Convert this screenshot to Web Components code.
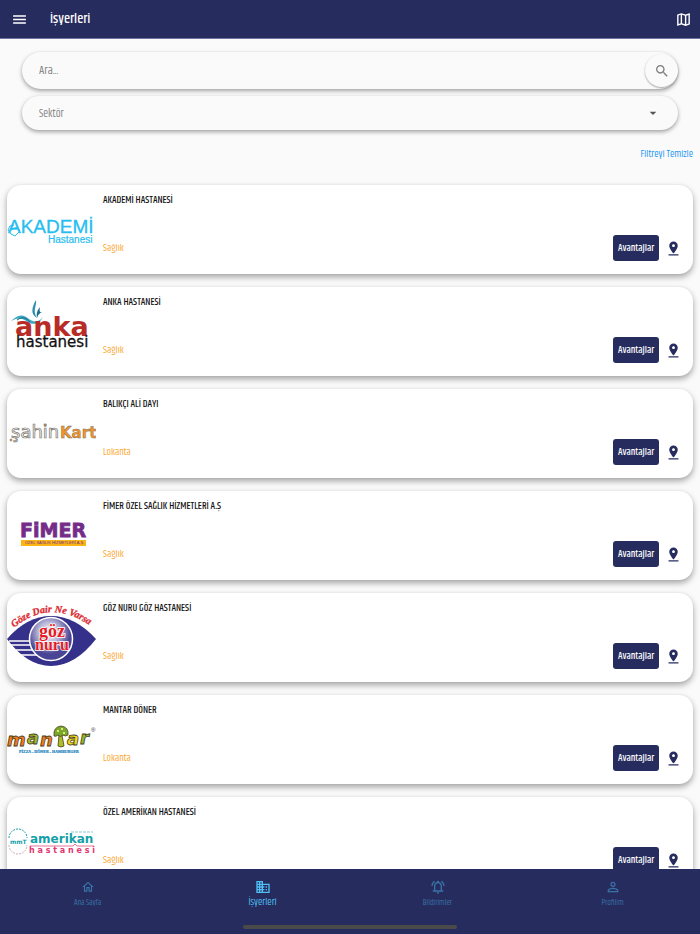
<!DOCTYPE html>
<html lang="tr">
<head>
<meta charset="utf-8">
<meta name="viewport" content="width=device-width, initial-scale=1">
<title>İşyerleri</title>
<style>
  body {
    margin: 0;
    font-family: Khand, "Liberation Sans Narrow", "Roboto Condensed", "Liberation Sans", sans-serif;
    --navy: #272c5e;
    --page: #fafafa;
  }
  .bold { font-family: "DejaVu Sans", sans-serif; font-weight: bold; }
  .wide { font-family: "DejaVu Sans", sans-serif; }
  .sans { font-family: "Liberation Sans", sans-serif; }
  .serif { font-family: "Liberation Serif", serif; font-weight: bold; }
</style>
</head>
<body>
<app-shell>
  <app-header slot="header" heading="İşyerleri"></app-header>
  <business-filter></business-filter>
  <business-list>
    <business-card name="AKADEMİ HASTANESİ" category="Sağlık">
      <svg slot="logo" viewBox="0 0 89 89" fill="#27bdf0">
        <text class="sans" x="1" y="48" font-size="19" stroke="#27bdf0" stroke-width=".3">AKADEMİ</text>
        <text class="sans" x="41" y="58" font-size="10" stroke="#27bdf0" stroke-width=".2">Hastanesi</text>
        <path d="M7 40l-4 1-2 4 3 4 4 2 5-5-3-4-6 3" fill="none" stroke="#27bdf0"/>
      </svg>
    </business-card>
    <business-card name="ANKA HASTANESİ" category="Sağlık">
      <svg slot="logo" viewBox="0 0 89 89">
        <path d="M4 34c8-7 12-7 18-2 5 4 10 3 14-2-3 6-9 9-15 5-6-4-9-5-17-1z" fill="#3aa9c4"/>
        <path d="M29 13c1 6-4 10 1 18-7-4-5-11-1-18z" fill="#2b8fae"/>
        <path d="M37 25c-4 0-6 3-7 6-1-4 0-8 3-11-1 5 0 6 4 5z" fill="#1e6f8c"/>
        <path d="M10 33c6-4 9-2 13 2" fill="none" stroke="#176480"/>
        <text class="bold" x="8" y="49" font-size="27" fill="#b92b27">anka</text>
        <text class="wide" x="9" y="60" font-size="15" fill="#111" stroke="#111" stroke-width=".3">hastanesi</text>
      </svg>
    </business-card>
    <business-card name="BALIKÇI ALİ DAYI" category="Lokanta">
      <svg slot="logo" viewBox="0 0 89 89" stroke="#77736b" stroke-width=".7">
        <text class="wide" x="4" y="49" font-size="18" fill="#fff">şahin</text>
        <text class="bold" x="53" y="49" font-size="15" fill="#ef942a" stroke-width=".4">Kart</text>
        <circle cx="4" cy="51" r="1" fill="#ef942a"/>
        <circle cx="38" cy="36" r="1" fill="#ef942a"/>
      </svg>
    </business-card>
    <business-card name="FİMER ÖZEL SAĞLIK HİZMETLERİ A.Ş" category="Sağlık">
      <svg slot="logo" viewBox="0 0 89 89" fill="#752c89">
        <text class="bold" x="13" y="46" font-size="19" stroke="#752c89" stroke-width=".8">FiMER</text>
        <path d="M14 49h65v6H14z" fill="#fbb614"/>
        <text class="sans" x="18" y="53" font-size="4">ÖZEL SAĞLIK HİZMETLERİ A.Ş.</text>
      </svg>
    </business-card>
    <business-card name="GÖZ NURU GÖZ HASTANESİ" category="Sağlık">
      <svg slot="logo" viewBox="0 0 89 89">
        <defs>
          <radialGradient id="iris" cx=".45" cy=".35">
            <stop offset="0" stop-color="#fff"/>
            <stop offset=".5" stop-color="#b6b5d7"/>
            <stop offset="1" stop-color="#4a4494"/>
          </radialGradient>
          <path id="brow" d="M7 35Q44 3 88 36"/>
        </defs>
        <path d="M0 46Q20 23 44 23T89 46Q68 73 44 73T0 46z" fill="#35308a"/>
        <path d="M2 48h24M4 52h22M9 57h19M14 62h17" stroke="#fff" stroke-width="1.4"/>
        <circle cx="44" cy="46" r="21.5" fill="url(#iris)" stroke="#fff" stroke-width="1.5"/>
        <g class="serif" fill="#e41c26" stroke="#fff" stroke-width="1.5" paint-order="stroke">
          <text x="32" y="44" font-size="18">göz</text>
          <text x="28" y="57" font-size="16">nuru</text>
        </g>
        <text class="serif" font-size="10" font-style="italic" fill="#dc2a30" stroke="#dc2a30" stroke-width=".3"><textPath href="#brow">Göze Dair Ne Varsa</textPath></text>
      </svg>
    </business-card>
    <business-card name="MANTAR DÖNER" category="Lokanta">
      <svg slot="logo" viewBox="0 0 89 89">
        <g class="bold" font-size="18" font-style="italic" stroke="#4d3b20" stroke-width=".8">
          <text x="0" y="51" fill="#ef7d20">m</text>
          <text x="20" y="49" fill="#9fbd2a">a</text>
          <text x="33" y="51" fill="#ef7d20">n</text>
          <text x="60" y="50" fill="#f2df1c">a</text>
          <text x="73" y="49" fill="#8dbb2d">r</text>
          <path d="M52 40l-1 11q3 2 6 0l-2-11z" fill="#a9bf25"/>
          <path d="M47 41q-1-9 7-10 8 1 7 9-3 2-5 0-3 3-5 0-2 2-4 1z" fill="#79a92c"/>
          <path d="M50 36h2M54 34h2M56 38h2" stroke="#e4e86a" stroke-width="2"/>
        </g>
        <text class="sans" x="84" y="37" font-size="6" fill="#333">®</text>
        <text class="serif" x="12" y="58" font-size="4" fill="#1b83bd" stroke="#1b83bd" stroke-width=".2">PİZZA - DÖNER - HAMBURGER</text>
      </svg>
    </business-card>
    <business-card name="ÖZEL AMERİKAN HASTANESİ" category="Sağlık">
      <svg slot="logo" viewBox="0 0 89 89" fill="#159fa9">
        <path d="M2 41a9 9 0 0 1 18 0" fill="none" stroke="#159fa9" stroke-dasharray="2 1"/>
        <path d="M2 48a9 9 0 0 0 18 0" fill="none" stroke="#c8b0b8" stroke-dasharray="2 1"/>
        <text class="bold" x="3" y="47" font-size="6">mmT</text>
        <path d="M64 35h22" stroke="#8dcad1" stroke-dasharray="3 1"/>
        <text class="bold" x="23" y="46" font-size="12">amerikan</text>
        <path d="M23 49h43l2-2 2 2h17" fill="none" stroke="#e3356f" stroke-width=".7"/>
        <text class="bold" x="22" y="56" font-size="8" fill="#e3356f">h a s t a n e s i</text>
      </svg>
    </business-card>
  </business-list>
  <tab-bar slot="footer"></tab-bar>
</app-shell>

<script>
const icons = {
  menu: "M3 18h18v-2H3v2zm0-5h18v-2H3v2zm0-7v2h18V6H3z",
  map: "M20.5 3l-.16.03L15 5.1 9 3 3.36 4.9c-.21.07-.36.25-.36.48V20.5c0 .28.22.5.5.5l.16-.03L9 18.9l6 2.1 5.64-1.9c.21-.07.36-.25.36-.48V3.5c0-.28-.22-.5-.5-.5zM10 5.47l4 1.4v11.66l-4-1.4V5.47zm-5 .99l3-1.01v11.7l-3 1.16V6.46zm14 11.08l-3 1.01V6.86l3-1.16v11.84z",
  search: "M15.5 14h-.79l-.28-.27C15.41 12.59 16 11.11 16 9.5 16 5.91 13.09 3 9.5 3S3 5.91 3 9.5 5.91 16 9.5 16c1.61 0 3.09-.59 4.23-1.57l.27.28v.79l5 4.99L20.49 19l-4.99-5zm-6 0C7.01 14 5 11.99 5 9.5S7.01 5 9.5 5 14 7.01 14 9.5 11.99 14 9.5 14z",
  arrow: "M7 10l5 5 5-5z",
  pin: "M18 8c0-3.31-2.69-6-6-6S6 4.69 6 8c0 4.5 6 11 6 11s6-6.5 6-11zm-8 0c0-1.1.9-2 2-2s2 .9 2 2-.89 2-2 2c-1.1 0-2-.9-2-2zM5 20v2h14v-2H5z",
  home: "M12 5.69l5 4.5V18h-2v-6H9v6H7v-7.81l5-4.5M12 3L2 12h3v8h6v-6h2v6h6v-8h3L12 3z",
  business: "M12 7V3H2v18h20V7H12zM6 19H4v-2h2v2zm0-4H4v-2h2v2zm0-4H4V9h2v2zm0-4H4V5h2v2zm4 12H8v-2h2v2zm0-4H8v-2h2v2zm0-4H8V9h2v2zm0-4H8V5h2v2zm10 12h-8v-2h2v-2h-2v-2h2v-2h-2V9h8v10zm-2-8h-2v2h2v-2zm0 4h-2v2h2v-2z",
  bell: "M12 22c1.1 0 2-.9 2-2h-4c0 1.1.9 2 2 2zm6-6v-5c0-3.07-1.63-5.64-4.5-6.32V4c0-.83-.67-1.5-1.5-1.5s-1.5.67-1.5 1.5v.68C7.64 5.36 6 7.92 6 11v5l-2 2v1h16v-1l-2-2zm-2 1H8v-6c0-2.48 1.51-4.5 4-4.5s4 2.02 4 4.5v6zM7.58 4.08L6.15 2.65C3.75 4.48 2.17 7.3 2.03 10.5h2c.15-2.65 1.51-4.97 3.55-6.42zm12.39 6.42h2c-.15-3.2-1.73-6.02-4.12-7.85l-1.42 1.43c2.02 1.45 3.39 3.77 3.54 6.42z",
  person: "M12 5.9c1.16 0 2.1.94 2.1 2.1s-.94 2.1-2.1 2.1S9.9 9.16 9.9 8s.94-2.1 2.1-2.1m0 9c2.97 0 6.1 1.46 6.1 2.1v1.1H5.9V17c0-.64 3.13-2.1 6.1-2.1M12 4C9.79 4 8 5.79 8 8s1.79 4 4 4 4-1.79 4-4-1.79-4-4-4zm0 9c-2.67 0-8 1.34-8 4v3h16v-3c0-2.66-5.33-4-8-4z"
};
const icon = (name, size = 16) =>
  `<svg width="${size}" height="${size}" viewBox="0 0 24 24" fill="currentColor" aria-hidden="true"><path d="${icons[name]}"/></svg>`;

const base = `
  *, :host { box-sizing: border-box; }
  button { font: inherit; color: inherit; background: none; border: 0; padding: 0; cursor: pointer; display: grid; place-items: center; }
  svg { display: block; }
`;

class BaseElement extends HTMLElement {
  constructor() {
    super();
    this.attachShadow({ mode: "open" });
  }
  connectedCallback() {
    const t = document.createElement("template");
    t.innerHTML = `<style>${base}${this.styles()}</style>${this.render()}`;
    this.shadowRoot.replaceChildren(t.content.cloneNode(true));
  }
}

class AppShell extends BaseElement {
  styles() {
    return `
      :host { display: flex; flex-direction: column; height: 100vh; background: var(--page); }
      main { flex: 1; min-height: 0; overflow: auto; scrollbar-width: none; }
    `;
  }
  render() {
    return `<slot name="header"></slot><main><slot></slot></main><slot name="footer"></slot>`;
  }
}

class AppHeader extends BaseElement {
  styles() {
    return `
      :host { display: block; background: var(--navy); color: #fff; border-bottom: 1px solid #7174a0; }
      header { display: flex; align-items: center; height: 38px; padding: 0 8px 0 11px; }
      h1 { flex: 1; margin: 0 0 0 22px; font-size: 14px; line-height: 16px; font-weight: 500; }
    `;
  }
  render() {
    return `<header>
      <button aria-label="Menü">${icon("menu", 17)}</button>
      <h1>${this.getAttribute("heading")}</h1>
      <button aria-label="Harita">${icon("map", 17)}</button>
    </header>`;
  }
}

class BusinessFilter extends BaseElement {
  styles() {
    return `
      :host { display: block; padding: 13px 7px 0; }
      form { display: grid; gap: 7px; padding: 0 15px; }
      .field { display: flex; align-items: center; border-radius: 19px; background: var(--page); color: #7d7d7d; box-shadow: 0 2px 4px rgba(0, 0, 0, .35), 0 0 2px rgba(0, 0, 0, .06); }
      .search { height: 37px; }
      .sector { height: 34px; display: grid; }
      .sector > * { grid-area: 1 / 1; }
      .sector svg { justify-self: end; margin-right: 17px; color: #555; pointer-events: none; }
      input, select { width: 100%; height: 100%; min-width: 0; margin: 0; padding: 0 17px; border: 0; border-radius: inherit; outline: 0; background: none; color: inherit; font-family: inherit; font-size: 12px; }
      select { appearance: none; font-size: 11px; }
      input::placeholder { color: inherit; opacity: 1; }
      .go { flex: none; width: 33px; height: 33px; border-radius: 50%; background: var(--page); box-shadow: 0 1px 2px rgba(0, 0, 0, .35); }
      .clear { display: flex; justify-content: flex-end; padding-top: 17px; }
      a { color: #2196f3; font-size: 10px; line-height: 14px; text-decoration: none; }
    `;
  }
  render() {
    return `<form onsubmit="return false">
      <div class="field search">
        <input type="text" placeholder="Ara..." aria-label="Ara">
        <button class="go" aria-label="Ara">${icon("search")}</button>
      </div>
      <div class="field sector">
        <select aria-label="Sektör"><option>Sektör</option><option>Sağlık</option><option>Lokanta</option></select>
        ${icon("arrow")}
      </div>
    </form>
    <div class="clear"><a href="#">Filtreyi Temizle</a></div>`;
  }
}

class BusinessList extends BaseElement {
  styles() {
    return `:host { display: grid; gap: 13px; padding: 24px 7px 13px; }`;
  }
  render() {
    return `<slot></slot>`;
  }
}

class BusinessCard extends BaseElement {
  styles() {
    return `
      :host { display: block; }
      article { display: flex; gap: 7px; height: 89px; border-radius: 14px; background: #fff; box-shadow: 0 3px 6px rgba(0, 0, 0, .35), 0 0 2px rgba(0, 0, 0, .06); }
      ::slotted(svg) { display: block; width: 89px; height: 89px; flex: none; }
      .info { flex: 1; display: flex; flex-direction: column; justify-content: space-between; padding: 8px 11px 13px 0; }
      h2 { margin: 0; font-size: 10px; line-height: 14px; font-weight: 500; color: #111; }
      .row { display: flex; align-items: center; gap: 6px; }
      .category { flex: 1; font-size: 10px; line-height: 14px; color: #fba52c; }
      .perks { width: 46px; height: 26px; border-radius: 3px; background: var(--navy); color: #fff; font-size: 10px; font-weight: 500; }
      .pin { color: var(--navy); }
    `;
  }
  render() {
    return `<article>
      <slot name="logo"></slot>
      <div class="info">
        <h2>${this.getAttribute("name")}</h2>
        <div class="row">
          <span class="category">${this.getAttribute("category")}</span>
          <button class="perks">Avantajlar</button>
          <button class="pin" aria-label="Konum">${icon("pin", 17)}</button>
        </div>
      </div>
    </article>`;
  }
}

class TabBar extends BaseElement {
  styles() {
    return `
      :host { display: flex; flex-direction: column; align-items: center; height: 65px; padding-bottom: 5px; background: var(--navy); }
      nav { flex: 1; width: 100%; display: grid; grid-template-columns: repeat(4, 1fr); padding-top: 10px; }
      a { display: flex; flex-direction: column; align-items: center; gap: 1px; color: #3973a8; font-size: 8px; line-height: 14px; text-decoration: none; }
      a svg { height: 16px; }
      a[aria-current] { color: #4fc0f5; font-size: 10px; line-height: 12px; }
      .handle { width: 214px; height: 4px; border-radius: 2px; background: #4b4a4a; }
    `;
  }
  render() {
    return `<nav>
      <a href="#">${icon("home", 14)}Ana Sayfa</a>
      <a href="#" aria-current="page">${icon("business")}İşyerleri</a>
      <a href="#">${icon("bell")}Bildirimler</a>
      <a href="#">${icon("person")}Profilim</a>
    </nav>
    <div class="handle"></div>`;
  }
}

customElements.define("app-shell", AppShell);
customElements.define("app-header", AppHeader);
customElements.define("business-filter", BusinessFilter);
customElements.define("business-list", BusinessList);
customElements.define("business-card", BusinessCard);
customElements.define("tab-bar", TabBar);
</script>
</body>
</html>
